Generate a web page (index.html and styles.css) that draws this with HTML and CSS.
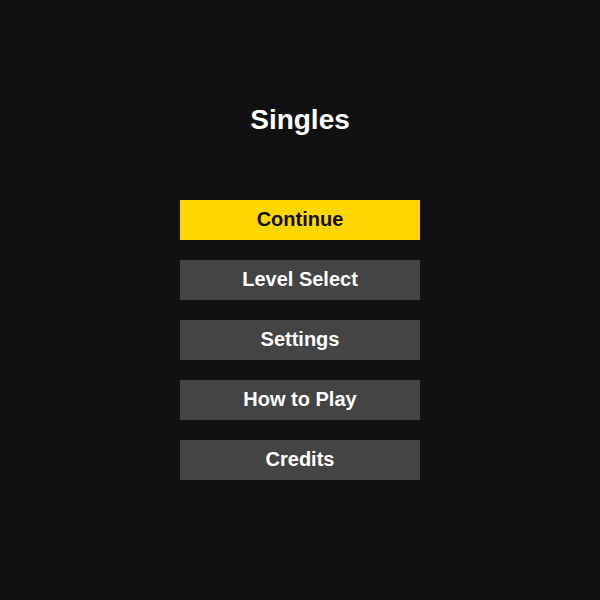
FILE: index.html
```html
<!DOCTYPE html>
<html lang="en">
<head>
    <meta charset="UTF-8">
    <meta name="viewport" content="width=device-width, initial-scale=1.0">
    <title>Singles</title>
    <link rel="stylesheet" href="styles.css">
</head>
<body>
    <div id="menu">
        <h1 class="title">Singles</h1>
        <div class="buttons">
            <button class="btn active">Continue</button>
            <button class="btn">Level Select</button>
            <button class="btn">Settings</button>
            <button class="btn">How to Play</button>
            <button class="btn">Credits</button>
        </div>
    </div>
</body>
</html>
```

FILE: styles.css
```css
html, body{
    margin:0;
    height:100%;
    background:#111;
}
#menu{
    display:flex;
    flex-direction:column;
    align-items:center;
    padding-top:104px;
    font-family:"Liberation Sans", Arial, sans-serif;
}
#menu .title{
    margin:0 0 64px;
    color:#fff;
    font-size:28px;
    line-height:32px;
    font-weight:bold;
}
#menu .buttons{
    display:flex;
    flex-direction:column;
    gap:20px;
}
#menu .btn{
    width:240px;
    height:40px;
    border:none;
    padding:0 0 2px;
    background:#444;
    color:#fff;
    font-family:inherit;
    font-size:20px;
    font-weight:bold;
    cursor:pointer;
}
#menu .btn.active{
    background:#ffd700;
    color:#111;
}
```
